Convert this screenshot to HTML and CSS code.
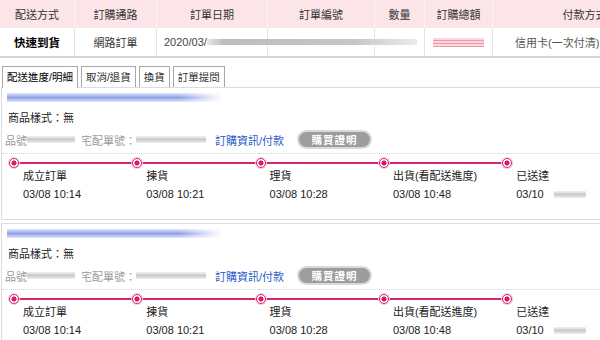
FILE: index.html
```html
<!DOCTYPE html>
<html lang="zh-Hant">
<head>
<meta charset="utf-8">
<title>訂單查詢</title>
<link rel="stylesheet" href="styles.css">
</head>
<body>
<div class="order-table">
  <div class="th">配送方式</div>
  <div class="th">訂購通路</div>
  <div class="th">訂單日期</div>
  <div class="th">訂單編號</div>
  <div class="th">數量</div>
  <div class="th">訂購總額</div>
  <div class="th">付款方式</div>
  <div class="td strong">快速到貨</div>
  <div class="td">網路訂單</div>
  <div class="td left">2020/03/<span class="blur-grey wide"></span></div>
  <div class="td"></div>
  <div class="td"></div>
  <div class="td"><span class="blur-pink"></span></div>
  <div class="td pay">信用卡(一次付清)</div>
</div>

<div class="tabs">
  <div class="tab active">配送進度/明細</div>
  <div class="tab">取消/退貨</div>
  <div class="tab">換貨</div>
  <div class="tab">訂單提問</div>
</div>

<div class="panel">
  <div class="blur-blue"></div>
  <div class="spec">商品樣式：無</div>
  <div class="info">
    <span class="muted">品號</span><span class="blur-grey sku"></span>
    <span class="muted ship">宅配單號：</span><span class="blur-grey shipno"></span>
    <a class="link" href="#">訂購資訊/付款</a>
    <span class="proof-btn">購買證明</span>
  </div>
  <div class="timeline">
    <div class="step"><span class="dot"></span><div class="label">成立訂單</div><div class="time">03/08 10:14</div></div>
    <div class="step"><span class="dot"></span><div class="label">揀貨</div><div class="time">03/08 10:21</div></div>
    <div class="step"><span class="dot"></span><div class="label">理貨</div><div class="time">03/08 10:28</div></div>
    <div class="step"><span class="dot"></span><div class="label">出貨(看配送進度)</div><div class="time">03/08 10:48</div></div>
    <div class="step"><span class="dot"></span><div class="label">已送達</div><div class="time">03/10<span class="blur-grey tail"></span></div></div>
  </div>
</div>

<div class="panel">
  <div class="blur-blue"></div>
  <div class="spec">商品樣式：無</div>
  <div class="info">
    <span class="muted">品號</span><span class="blur-grey sku"></span>
    <span class="muted ship">宅配單號：</span><span class="blur-grey shipno"></span>
    <a class="link" href="#">訂購資訊/付款</a>
    <span class="proof-btn">購買證明</span>
  </div>
  <div class="timeline">
    <div class="step"><span class="dot"></span><div class="label">成立訂單</div><div class="time">03/08 10:14</div></div>
    <div class="step"><span class="dot"></span><div class="label">揀貨</div><div class="time">03/08 10:21</div></div>
    <div class="step"><span class="dot"></span><div class="label">理貨</div><div class="time">03/08 10:28</div></div>
    <div class="step"><span class="dot"></span><div class="label">出貨(看配送進度)</div><div class="time">03/08 10:48</div></div>
    <div class="step"><span class="dot"></span><div class="label">已送達</div><div class="time">03/10<span class="blur-grey tail"></span></div></div>
  </div>
</div>
</body>
</html>
```
FILE: styles.css
```css
* { box-sizing: border-box; }
html, body { margin: 0; padding: 0; background: #fff; }
body {
  width: 600px;
  height: 340px;
  overflow: hidden;
  font-family: "Liberation Sans", "Noto Sans CJK TC", sans-serif;
  font-size: 11px;
  color: #222;
}

/* order summary table */
.order-table {
  display: grid;
  grid-template-columns: 75px 82px 111px 107px 50px 68px 184px;
  width: 677px;
  border-bottom: 2px solid #d6d6d6;
}
.th, .td {
  height: 28px;
  display: flex;
  align-items: center;
  justify-content: center;
  white-space: nowrap;
}
.th {
  background: #fce5e9;
  border-right: 1px solid #fbf3f4;
  color: #333;
}
.td {
  border-right: 1px solid #e4e4e4;
  color: #333;
}
.td.strong { color: #000; font-weight: bold; font-size: 11.5px; }
.td.left { justify-content: flex-start; padding-left: 7px; color: #444; }
.td.pay { justify-content: flex-start; padding-left: 22px; color: #555; }

.blur-grey {
  display: inline-block;
  flex-shrink: 0;
  height: 7px;
  background: linear-gradient(to bottom, #f1f1f1, #c9c9c9 50%, #f1f1f1);
  filter: blur(0.6px);
}
.blur-grey.wide {
  width: 210px;
  height: 6px;
  background: linear-gradient(to right, #e6e6e6, #bdbdbd 8%, #c6c6c6 70%, #ececec);
}
.blur-pink {
  display: inline-block;
  width: 51px;
  height: 9px;
  background: repeating-linear-gradient(to bottom, #fbd6dc 0 2px, #ee9aa8 2px 3px);
  filter: blur(0.5px);
}

/* tabs */
.tabs {
  display: flex;
  gap: 3px;
  margin-top: 8px;
  padding-left: 2px;
  margin-bottom: -1px;
}
.tab {
  position: relative;
  height: 21px;
  line-height: 20px;
  padding: 0 4px;
  border: 1px solid #a8a8a8;
  border-bottom: none;
  background: #fff;
  color: #333;
  font-size: 10.5px;
}
.tab.active {
  height: 22px;
  color: #000;
}

/* panel */
.panel {
  width: 700px;
  margin-left: 1px;
  margin-bottom: 3px;
  border: 1px solid #dcdcdc;
}
.blur-blue {
  width: 215px;
  height: 9px;
  margin: 5px 0 0 5px;
  background: linear-gradient(to bottom, #e3e8fb, #8e9fe6 50%, #e3e8fb);
  -webkit-mask-image: linear-gradient(to right, #000 80%, transparent);
  mask-image: linear-gradient(to right, #000 80%, transparent);
  filter: blur(0.5px);
}
.spec {
  margin: 8px 0 0 6px;
  line-height: 16px;
  color: #222;
}
.info {
  display: flex;
  align-items: center;
  height: 19px;
  margin-top: 4px;
  padding-left: 3px;
  white-space: nowrap;
}
.muted { color: #9a9a9a; }
.sku { width: 48px; }
.ship { margin-left: 6px; }
.shipno { width: 70px; }
.link {
  margin-left: 9px;
  color: #2c5bc9;
  text-decoration: none;
}
.proof-btn {
  margin-left: 13px;
  width: 75px;
  height: 19px;
  border-radius: 10px;
  border: 2px solid #d9d9d9;
  background: #9d9d9d;
  color: #fff;
  font-weight: bold;
  font-size: 10.5px;
  letter-spacing: 1px;
  display: flex;
  align-items: center;
  justify-content: center;
}

/* timeline */
.timeline {
  margin-top: 4px;
  border-top: 1px dotted #c9d6d6;
  padding: 0 0 17px 7px;
  display: grid;
  grid-template-columns: repeat(5, 123.3px);
  background: linear-gradient(#d6246e, #d6246e) no-repeat;
  background-size: 493px 2px;
  background-position: 12px 8px;
}
.step { display: flex; flex-direction: column; }
.dot {
  width: 10px;
  height: 10px;
  margin-top: 4px;
  border-radius: 50%;
  border: 1.5px solid #d6246e;
  background: radial-gradient(circle, #d81b6a 0 2.3px, #fff 2.8px);
  box-shadow: 0 0 0 1px #f3c7d6;
}
.label {
  margin-left: 14px;
  line-height: 16px;
  color: #222;
  white-space: nowrap;
}
.time {
  margin: 2px 0 0 14px;
  line-height: 16px;
  color: #222;
  display: flex;
  align-items: center;
  white-space: nowrap;
}
.tail { width: 32px; margin-left: 10px; }
```
